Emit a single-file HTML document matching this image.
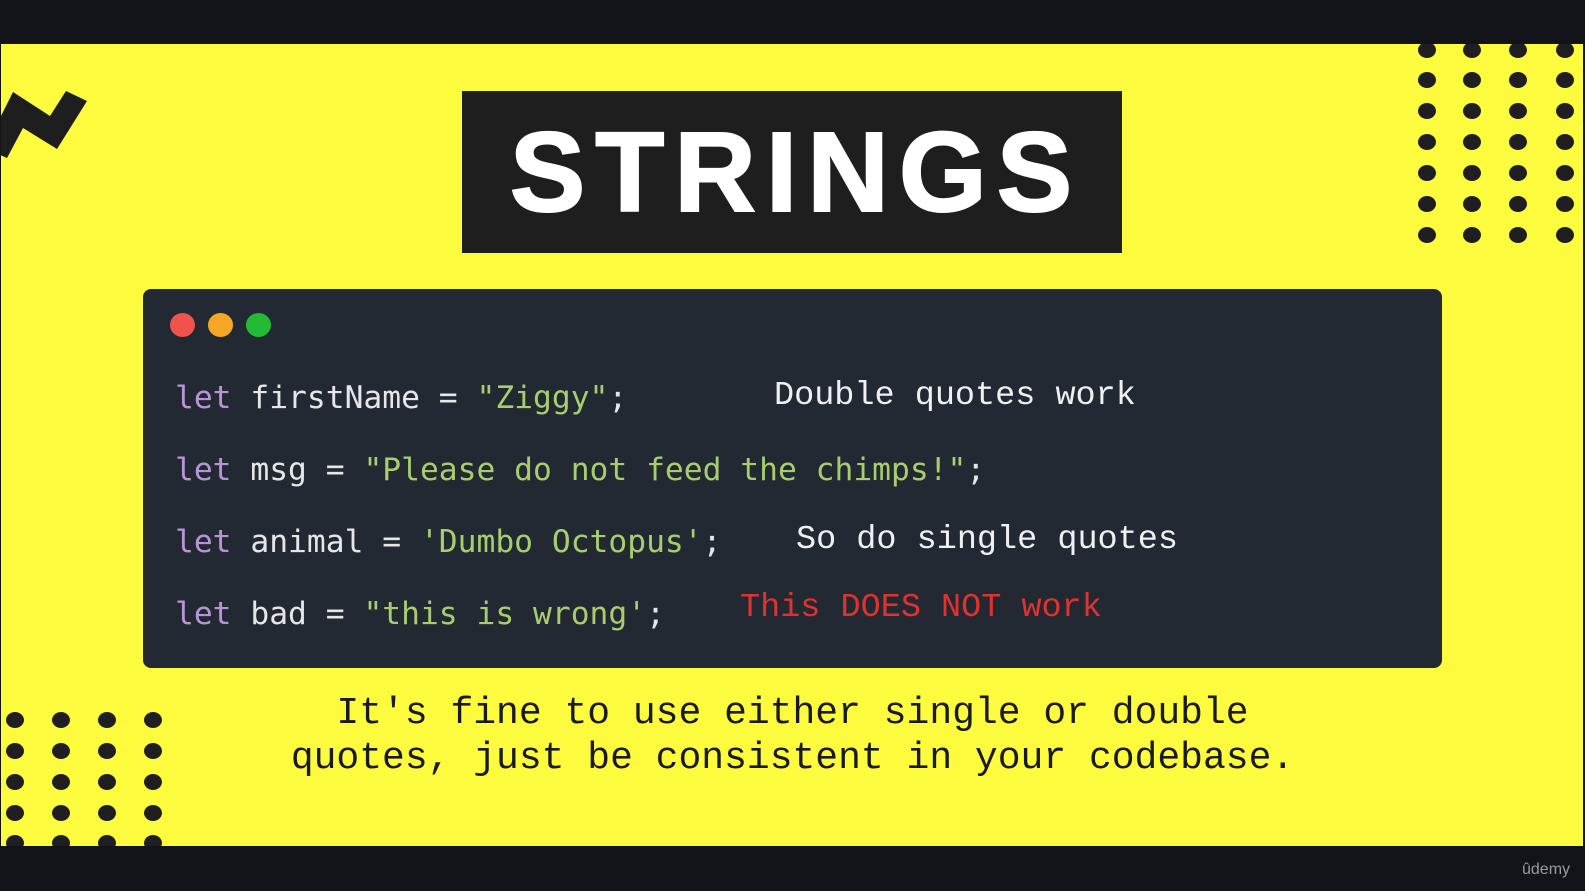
<!DOCTYPE html>
<html><head><meta charset="utf-8"><style>
*{margin:0;padding:0;box-sizing:border-box}
body{width:1585px;height:891px;overflow:hidden;background:#12141a;position:relative;font-family:"Liberation Mono",monospace}
.y{position:absolute;left:1px;top:44px;width:1582px;height:802px;background:#fdfb3d;overflow:hidden}
.d{position:absolute;width:18px;height:16px;border-radius:50%;background:#1f1f22}
.title{position:absolute;left:462px;top:91px;width:660px;height:162px;background:#1e1e1e;color:#fff;font-family:"Liberation Sans",sans-serif;font-weight:700;font-size:113px;letter-spacing:10px;text-align:center;line-height:162px;padding-left:8px;-webkit-text-stroke:2px #fff}
.panel{position:absolute;left:143px;top:289px;width:1299px;height:379px;background:#232932;border-radius:8px}
.c{position:absolute;font-family:"DejaVu Sans Mono",monospace;font-size:31.3px;line-height:40px;left:175px;color:#e4e6e8;white-space:pre}
.k{color:#b995d8}.s{color:#a9cd6e}
.a{position:absolute;font-size:33.5px;line-height:40px;color:#eef0f2;white-space:pre}
.b{position:absolute;left:0;width:1585px;text-align:center;font-size:38px;line-height:45px;color:#1a1a1a;white-space:pre}
.tl{position:absolute;top:313px;width:25px;height:24px;border-radius:50%}
</style></head><body>
<div class="y">
<svg style="position:absolute;left:-1px;top:-44px" width="100" height="200"><polygon points="13,92 50,116 66,91 87,101 57,149 23,128 7,158 0,155 0,118" fill="#1e1e1e"/></svg>
</div>
<div id="dots"></div>
<div class="title">STRINGS</div>
<div class="panel"></div>
<div class="tl" style="left:170px;background:#f0524c"></div>
<div class="tl" style="left:208px;background:#f5a623"></div>
<div class="tl" style="left:246px;background:#22bb33"></div>
<div class="c" style="top:378px"><span class="k">let</span> firstName = <span class="s">"Ziggy"</span>;</div>
<div class="c" style="top:450px"><span class="k">let</span> msg = <span class="s">"Please do not feed the chimps!"</span>;</div>
<div class="c" style="top:522px"><span class="k">let</span> animal = <span class="s">'Dumbo Octopus'</span>;</div>
<div class="c" style="top:594px"><span class="k">let</span> bad = <span class="s">"this is wrong'</span>;</div>
<div class="a" style="left:774px;top:376px">Double quotes work</div>
<div class="a" style="left:796px;top:520px">So do single quotes</div>
<div class="a" style="left:740px;top:588px;color:#e0322e">This DOES NOT work</div>
<div class="b" style="top:691px">It's fine to use either single or double</div>
<div class="b" style="top:736px">quotes, just be consistent in your codebase.</div>
<div style="position:absolute;left:1522px;top:861px;color:#9a9ca0;font-family:'Liberation Sans',sans-serif;font-size:16px">ûdemy</div>
<script>
var h='';
[1427,1472,1518,1565].forEach(function(x){[50,80,111,142,173,204,235].forEach(function(y){h+='<div class="d" style="left:'+(x-9)+'px;top:'+(y-8)+'px;'+(y==50?'clip-path:inset(2px 0 0 0)':'')+'"></div>'})});
[15,61,107,153].forEach(function(x){[720,751,782,813,843].forEach(function(y){h+='<div class="d" style="left:'+(x-9)+'px;top:'+(y-8)+'px;'+(y==843?'clip-path:inset(0 0 5px 0)':'')+'"></div>'})});
document.getElementById('dots').innerHTML=h;
</script>
</body></html>
